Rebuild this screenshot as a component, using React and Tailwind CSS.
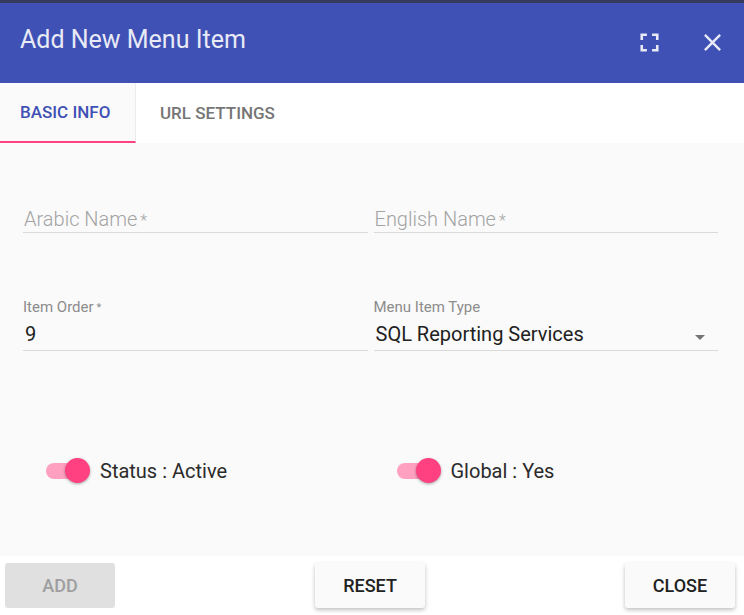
import React from "react";

const Field = ({ label, placeholder, value, select }) => {
  return (
    <div className="flex flex-col">
      <div className="h-[17px] mb-[2px] text-[15px] leading-[17px] text-[#8c8c8c]">
        {label}
      </div>
      <div className="relative h-[33px] border-b border-[#d9d9d9] flex items-center">
        {placeholder && (
          <span className="text-[20px] font-light text-[#a3a3a3] pt-[6px] pl-[1px]">
            {placeholder}
            <span className="text-[16px] ml-[3px]">*</span>
          </span>
        )}
        {value && (
          <span className="text-[20px] text-[#212121] pl-[2px] pb-[1px]">{value}</span>
        )}
        {select && (
          <svg
            className="absolute right-[6px] top-[7px] w-[24px] h-[24px]"
            viewBox="0 0 24 24"
            fill="#757575"
          >
            <path d="M7 10l5 5 5-5z" />
          </svg>
        )}
      </div>
    </div>
  );
};

const Toggle = ({ text }) => {
  return (
    <div className="flex items-center pl-[23px]">
      <div className="relative w-[44px] h-[25px] flex items-center">
        <div className="w-[40px] h-[16px] rounded-full bg-[#ffa0c0]"></div>
        <div className="absolute right-0 top-0 w-[25px] h-[25px] rounded-full bg-[#ff4081] shadow-[0_1px_3px_rgba(0,0,0,0.35)]"></div>
      </div>
      <span className="ml-[10px] text-[20px] leading-[20px] text-[#2b2b2b]">{text}</span>
    </div>
  );
};

const App = () => {
  return (
    <div className="w-[744px] h-[615px] bg-white flex flex-col overflow-hidden font-['Roboto',sans-serif]">
      <div className="h-[3px] bg-[#363b5e]"></div>

      {/* Header */}
      <header className="h-[80px] bg-[#3f51b5] flex items-center pl-[20px] pr-[17px]">
        <h1 className="text-[25px] text-[#e8eaf6] pb-[6px]">Add New Menu Item</h1>
        <div className="ml-auto flex items-center gap-[33px] pb-[2px]">
          <svg className="w-[31px] h-[31px]" viewBox="0 0 24 24" fill="#e8eaf6">
            <path d="M7 14H5v5h5v-2H7v-3zm-2-4h2V7h3V5H5v5zm12 7h-3v2h5v-5h-2v3zM14 5v2h3v3h2V5h-5z" />
          </svg>
          <svg className="w-[29px] h-[29px]" viewBox="0 0 24 24" fill="#e8eaf6">
            <path d="M19 6.41L17.59 5 12 10.59 6.41 5 5 6.41 10.59 12 5 17.59 6.41 19 12 13.41 17.59 19 19 17.59 13.41 12z" />
          </svg>
        </div>
      </header>

      {/* Tabs */}
      <div className="h-[60px] flex bg-white">
        <div className="w-[136px] h-full bg-[#fafafa] border-r border-r-[#ececec] border-b-2 border-b-[#ff4081] flex items-center pl-[20px] pt-[2px] text-[17px] font-medium text-[#3f51b5]">
          BASIC INFO
        </div>
        <div className="h-full flex items-center pl-[24px] pt-[1px] text-[17px] font-medium text-[#757575]">
          URL SETTINGS
        </div>
      </div>

      {/* Form */}
      <div className="h-[413px] bg-[#fafafa] pt-[38px] pl-[23px] pr-[26px]">
        <div className="grid grid-cols-2 gap-x-[6px]">
          <Field placeholder="Arabic Name" />
          <Field placeholder="English Name" />
        </div>
        <div className="grid grid-cols-2 gap-x-[6px] mt-[66px]">
          <Field
            label={
              <>
                Item Order<span className="text-[11px] align-top ml-[3px]">*</span>
              </>
            }
            value="9"
          />
          <Field label="Menu Item Type" value="SQL Reporting Services" select />
        </div>
        <div className="grid grid-cols-2 gap-x-[6px] mt-[107px]">
          <Toggle text="Status : Active" />
          <Toggle text="Global : Yes" />
        </div>
      </div>

      {/* Footer */}
      <footer className="h-[59px] bg-white flex justify-between items-start pt-[7px] pl-[5px] pr-[9px]">
        <button className="w-[110px] h-[45px] rounded-[3px] bg-[#e0e0e0] text-[18px] font-medium text-[#9e9e9e]">
          ADD
        </button>
        <button className="w-[110px] h-[45px] rounded-[3px] bg-[#fafafa] text-[18px] font-medium text-[#212121] shadow-[0_2px_4px_rgba(0,0,0,0.25)]">
          RESET
        </button>
        <button className="w-[110px] h-[45px] rounded-[3px] bg-[#fafafa] text-[18px] font-medium text-[#212121] shadow-[0_2px_4px_rgba(0,0,0,0.25)]">
          CLOSE
        </button>
      </footer>
    </div>
  );
};

export default App;
